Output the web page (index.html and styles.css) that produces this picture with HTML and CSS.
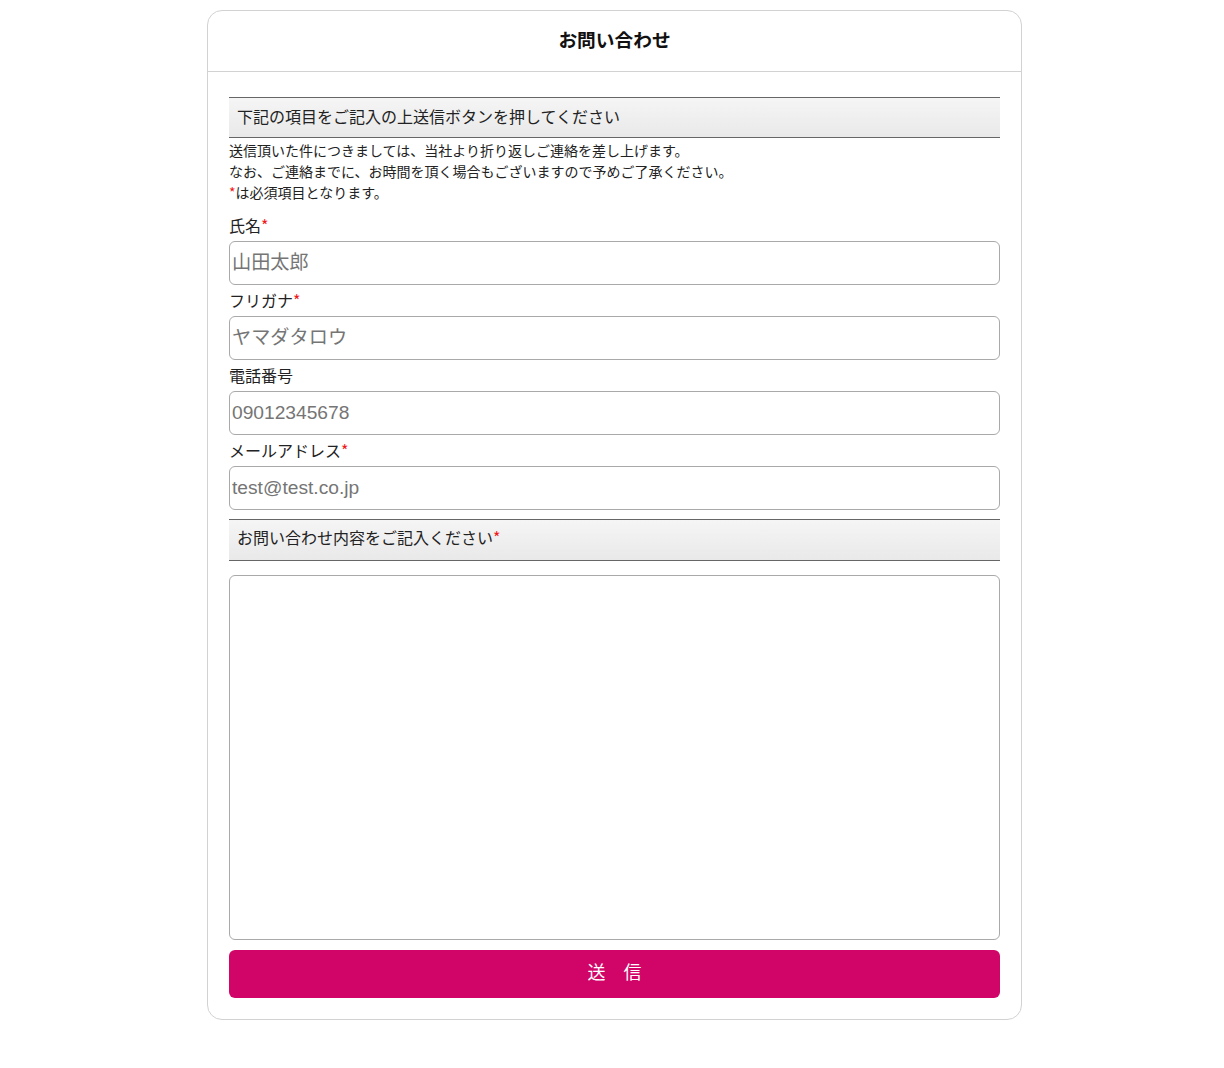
FILE: index.html
```html
<!DOCTYPE html>
<html lang="ja">
<head>
<meta charset="utf-8">
<title>お問い合わせ</title>
<link rel="stylesheet" href="styles.css">
</head>
<body>
<div class="card">
  <div class="card-head"><h3 class="title">お問い合わせ</h3></div>
  <form class="card-body">
    <div class="bar">下記の項目をご記入の上送信ボタンを押してください</div>
    <p class="notes">送信頂いた件につきましては、当社より折り返しご連絡を差し上げます。<br>なお、ご連絡までに、お時間を頂く場合もございますので予めご了承ください。<br><span class="req">*</span>は必須項目となります。</p>
    <label class="label">氏名<span class="req">*</span></label>
    <input class="field" type="text" placeholder="山田太郎">
    <label class="label">フリガナ<span class="req">*</span></label>
    <input class="field" type="text" placeholder="ヤマダタロウ">
    <label class="label">電話番号</label>
    <input class="field" type="text" placeholder="09012345678">
    <label class="label">メールアドレス<span class="req">*</span></label>
    <input class="field" type="text" placeholder="test@test.co.jp">
    <div class="bar bar-2">お問い合わせ内容をご記入ください<span class="req">*</span></div>
    <textarea class="message"></textarea>
    <button class="submit" type="button">送　信</button>
  </form>
</div>
</body>
</html>
```
FILE: styles.css
```css
html, body {
  margin: 0;
  padding: 0;
  background: #fff;
}
body {
  font-family: "Noto Sans CJK JP", "Noto Sans", sans-serif;
  color: #222;
  font-size: 16px;
}
.card {
  width: 813px;
  margin: 10px 0 48px 207px;
  border: 1px solid #d2d2d2;
  border-radius: 15px;
  background: #fff;
}
.card-head {
  height: 60px;
  border-bottom: 1px solid #d2d2d2;
  display: flex;
  align-items: center;
  justify-content: center;
}
.title {
  margin: 0;
  font-size: 18.72px;
  font-weight: 700;
  line-height: 24px;
  color: #111;
  padding-bottom: 5px;
}
.card-body {
  display: flex;
  flex-direction: column;
  padding: 25px 21px 21px 21px;
}
.bar {
  height: 36px;
  border-top: 1px solid #666;
  border-bottom: 1px solid #666;
  background: linear-gradient(#f5f5f5, #e9e9e9);
  display: flex;
  align-items: center;
  padding-left: 8px;
  padding-bottom: 3px;
  font-size: 16px;
  line-height: 24px;
  color: #222;
}
.bar-2 {
  height: 33px;
  padding-bottom: 7px;
  margin-top: 9px;
}
.notes {
  margin: 2px 0 7px;
  font-size: 14px;
  line-height: 21px;
  color: #222;
}
.req {
  color: #f01818;
}
.label {
  display: block;
  margin-top: 3px;
  margin-bottom: 4px;
  font-size: 16px;
  line-height: 24px;
}
.field {
  box-sizing: border-box;
  height: 44px;
  width: 100%;
  margin: 0;
  padding: 1px 2px;
  border: 1px solid #a9a9a9;
  border-radius: 6px;
  font-family: "Liberation Sans", "Noto Sans CJK JP", sans-serif;
  font-size: 19.2px;
  color: #333;
  background: #fff;
  outline: none;
}
.field::placeholder {
  color: #757575;
}
.message {
  box-sizing: border-box;
  display: block;
  width: 100%;
  height: 365px;
  margin: 14px 0 0;
  border: 1px solid #a9a9a9;
  border-radius: 6px;
  resize: none;
  font-family: "Liberation Sans", "Noto Sans CJK JP", sans-serif;
  font-size: 16px;
  outline: none;
}
.submit {
  margin-top: 10px;
  height: 48px;
  width: 100%;
  border: none;
  border-radius: 6px;
  padding: 0 0 6px;
  background: #d10567;
  color: #fff;
  font-family: "Noto Sans CJK JP", sans-serif;
  font-size: 18px;
  line-height: 24px;
  cursor: pointer;
}
```
